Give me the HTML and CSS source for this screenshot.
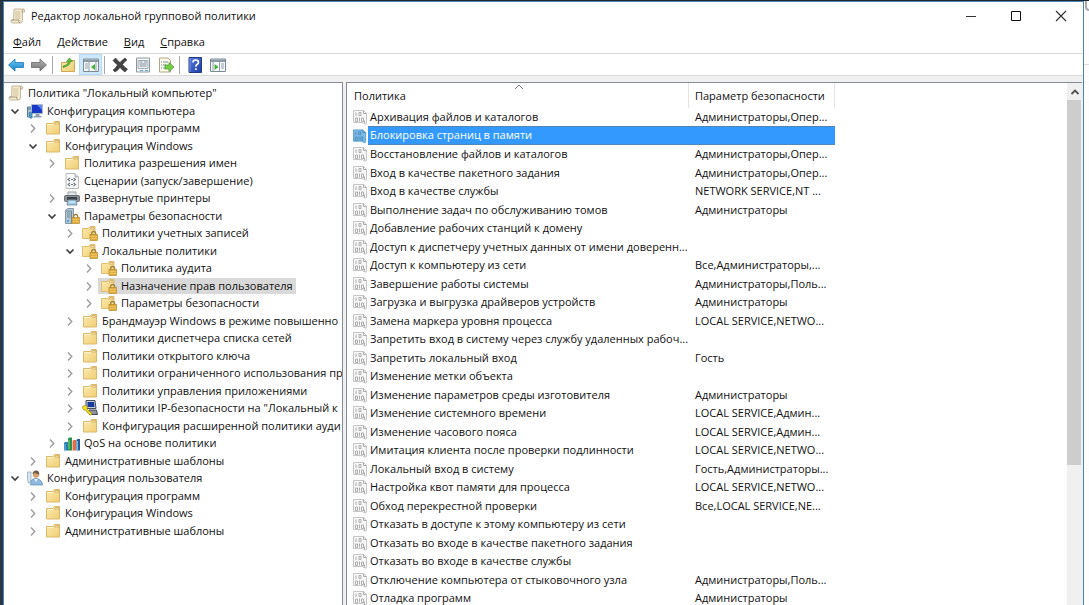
FILE: index.html
```html
<!DOCTYPE html>
<html lang="ru">
<head>
<meta charset="utf-8">
<title>Редактор локальной групповой политики</title>
<link rel="stylesheet" href="styles.css">
</head>
<body>
<svg class="sprite" aria-hidden="true">
  <defs>
    <linearGradient id="g-folder" x1="0" y1="0" x2="1" y2="1"><stop offset="0" stop-color="#fdebb0"/><stop offset="1" stop-color="#efce74"/></linearGradient>
    <linearGradient id="g-blue" x1="0" y1="0" x2="0" y2="1"><stop offset="0" stop-color="#6cc8f5"/><stop offset="1" stop-color="#1583cf"/></linearGradient>
    <linearGradient id="g-gray" x1="0" y1="0" x2="0" y2="1"><stop offset="0" stop-color="#b4b4b4"/><stop offset="1" stop-color="#747474"/></linearGradient>
    <linearGradient id="g-help" x1="0" y1="0" x2="1" y2="1"><stop offset="0" stop-color="#5a7ade"/><stop offset="1" stop-color="#1c3da8"/></linearGradient>
  </defs>
  <symbol id="open" viewBox="0 0 12 12"><path d="M2.500 4.500L6 8l3.500-3.500" fill="none" stroke="#404040" stroke-width="1.700"/></symbol>
  <symbol id="closed" viewBox="0 0 12 12"><path d="M4 2.500L7.700 6.500 4 10.500" fill="none" stroke="#a0a0a0" stroke-width="1.500"/></symbol>
  <symbol id="folder" viewBox="0 0 16 16"><path d="M1.500 3.500h6.500l1.500-2h5v12.500h-13z" fill="url(#g-folder)" stroke="#dcb968"/><path d="M9.500 4h4.500l-.5-1.500h-3z" fill="#fff3cc" stroke="#c9a254" stroke-width=".7"/><path d="M2.500 4.500h6" stroke="#fff6d2"/></symbol>
  <symbol id="lock" viewBox="0 0 16 16"><path d="M9.700 10V8.500a2 2 0 0 1 4 0V10" fill="none" stroke="#a08344" stroke-width="1.300"/><rect x="8" y="9.500" width="7.500" height="6" fill="#e0ac3c" stroke="#b98a2c" stroke-width=".7"/><path d="M8.500 11.500h6.500M8.500 13.500h6.500" stroke="#f1cf74" stroke-width=".7"/></symbol>
  <symbol id="lockfolder" viewBox="0 0 16 16"><path d="M.5 3.500h6l1.500-2h5v12h-12.500z" fill="url(#g-folder)" stroke="#dfbd70"/><path d="M8 4h4.500l-.5-1.500H9z" fill="#fff3cc" stroke="#c9a254" stroke-width=".7"/><use href="#lock"/></symbol>
  <symbol id="serverlock" viewBox="0 0 16 16"><path d="M1.500 2.500l2-2h6v13l-1.500 2h-6.500z" fill="#b4c8d4" stroke="#8197a6"/><path d="M2 3h5.500v12M3 5h3.500M3 7h3.500M3 9h3.500" fill="none" stroke="#6a8799"/><path d="M3 12h2v2h-2z" fill="#4aa8d8"/><use href="#lock"/></symbol>
  <symbol id="scroll" viewBox="0 0 16 16"><path d="M4 1h9.500q2 .5 1 3h-2v8.500q0 2.500-2.500 2.500h-7.500q-2-.5-1.500-3h2.500z" fill="#f4ead0" stroke="#b7aa8c" stroke-width=".8"/><path d="M12.500 4q-1-2 1-3M1.500 12h7.500q-.8 2 1 3" fill="none" stroke="#98886a" stroke-width=".8"/><path d="M5 4h5.500M5 6h5.500M5 8h5.500M5 10h5.500" stroke="#c9b98e" stroke-width=".8"/></symbol>
  <symbol id="pc" viewBox="0 0 16 16"><path d="M.5 4h4v10h-4z" fill="#a8c5d8" stroke="#557a96"/><path d="M4.500 1.500h11v9h-11z" fill="#1838c8" stroke="#b0bcc8"/><path d="M10 2h5v5z" fill="#5d87ee"/><path d="M8.500 11h4v2h2v1.500h-8V13h2z" fill="#8da0b2"/><path d="M1 6h3M2 10q3-2 3 1v4H3z" stroke="#3b82b6" fill="#559bcc"/></symbol>
  <symbol id="script" viewBox="0 0 16 16"><path d="M2 .5h9l3.500 3.500v11.500h-12.500z" fill="#fafafa" stroke="#bababa"/><path d="M11 .5v3.500h3.500" fill="#ddd" stroke="#aaa"/><path d="M6 5l-2 1.500L6 8M9.500 5l2 1.500-2 1.500M6 10l-2 1.500L6 13M9.500 10l2 1.500-2 1.500M7 6.500h2M7 11.500h2" fill="none" stroke="#707984" stroke-width="1.100"/></symbol>
  <symbol id="printer" viewBox="0 0 16 16"><path d="M4 2h8v4H4z" fill="#e2e6e9" stroke="#9aa1a6"/><rect x=".5" y="5.500" width="15" height="6" rx="1" fill="#8a9095" stroke="#6a7075"/><path d="M3 7h10v3H3z" fill="#3d4348"/><path d="M4 10h8l1 5H3z" fill="#9bcdea" stroke="#81939e"/><path d="M5 12h6" stroke="#e3f5ff"/></symbol>
  <symbol id="ipsec" viewBox="0 0 16 16"><path d="M4 .5h9l1 8H4z" fill="#c8ccd4" stroke="#48505c"/><path d="M5.500 2h6.500l.5 5H5.500z" fill="#173b9c"/><path d="M7 10h7.500l1 4.500H8z" fill="#8d949e" stroke="#444b55"/><path d="M1 6q3-1.500 4.500 1l-.5 2 5 4.500-1 1.500H7.500l-1-2-1.500-.5-.5-2Q1 10.500.500 8z" fill="#f5df24" stroke="#a08d12" stroke-width=".7"/></symbol>
  <symbol id="qos" viewBox="0 0 16 16"><path d="M0 8l1-1h3v8.500H0z" fill="#287fae"/><path d="M4 3.500l1-1h3v13H4z" fill="#28934e"/><path d="M5 5v9" stroke="#8ad66a"/><path d="M8.500 6l1-1h2.700v10.500H8.500z" fill="#df704b"/><path d="M12.500 5l1-1H16v11.500h-3.500z" fill="#245d9b"/><path d="M1 9v6M13.500 6v9" stroke="#6fc3e6"/></symbol>
  <symbol id="user" viewBox="0 0 16 16"><path d="M3.500 15l1-5 4-2 4 1.500q3 1.500 3 5.500z" fill="#8fb9df" stroke="#5b8db8" stroke-width=".7"/><circle cx="9" cy="4.500" r="3.200" fill="#d4a06e"/><path d="M5.500 4Q6 .3 9.500.5q3 .5 2.800 4Q9 4 8 2.500 7 4 5.500 4z" fill="#6b5846"/><path d="M.5 2h3.500v7l-1 4H1.500l-1-4z" fill="#d8e7f2" stroke="#8fa9be" stroke-width=".8"/><path d="M7 9l2 3 2-3" fill="#e6f0f8"/></symbol>
  <symbol id="policy" viewBox="0 0 16 16"><path d="M.5 1.500h10l3 3v9.500q0 1.500-2 1l-2-1.500h-9z" fill="#f7f7f7" stroke="#c6c6c6"/><path d="M10.500 1.500v3h3M11.500 11.500v3" fill="none" stroke="#adadad"/><path d="M3 3.500v3.500M2.500 9v3.500h2V9zM6.500 8.500v4M8.500 9v3.500h2V9zM6 3.500v3h2v-3z" fill="none" stroke="#a6a6a6" stroke-width=".9"/></symbol>
  <symbol id="policy-sel" viewBox="0 0 16 16"><path d="M.5 1.500h10l3 3v9.500q0 1.500-2 1l-2-1.500h-9z" fill="#7db9e4" stroke="#5d9fd0"/><path d="M10.500 1.500v3h3M3 3.500v3.500M2.500 9v3.500h2V9zM6.500 8.500v4M8.500 9v3.500h2V9zM6 3.500v3h2v-3z" fill="none" stroke="#4389be" stroke-width=".9"/></symbol>
</svg>

<div class="desktop">
  <main class="window">
    <header class="titlebar">
      <svg class="icon"><use href="#scroll"/></svg>
      <h1 class="title">Редактор локальной групповой политики</h1>
      <div class="captions">
        <button class="caption" aria-label="Свернуть"><svg viewBox="0 0 12 12"><path d="M1 6.500h10" stroke="#333" fill="none"/></svg></button>
        <button class="caption" aria-label="Развернуть"><svg viewBox="0 0 12 12"><path d="M1.500 1.500h9v9h-9z" stroke="#111" fill="none"/></svg></button>
        <button class="caption" aria-label="Закрыть"><svg viewBox="0 0 12 12"><path d="M1 1l10 10M11 1L1 11" stroke="#333" fill="none" stroke-width="1.200"/></svg></button>
      </div>
    </header>
    <nav class="menubar">
      <button class="menu"><u>Ф</u>айл</button>
      <button class="menu"><u>Д</u>ействие</button>
      <button class="menu"><u>В</u>ид</button>
      <button class="menu"><u>С</u>правка</button>
    </nav>
    <div class="toolbar" role="toolbar">
      <button class="tool" aria-label="Назад"><svg viewBox="0 0 16 16"><path d="M.5 8L7 2v3.500h8.500v5H7V14z" fill="url(#g-blue)" stroke="#1f76b2" stroke-width=".8"/></svg></button>
      <button class="tool" aria-label="Вперед"><svg viewBox="0 0 16 16"><path d="M15.500 8L9 2v3.500H.5v5H9V14z" fill="url(#g-gray)" stroke="#686868" stroke-width=".8"/></svg></button>
      <span class="divider"></span>
      <button class="tool" aria-label="Вверх"><svg viewBox="0 0 16 16"><path d="M1.500 5.500h6l1-2h6v11h-13z" fill="url(#g-folder)" stroke="#cfa955"/><path d="M3 9q5-1 5.500-4.500H6.500L9.500 1l3 3.500h-2Q10 9 3 10.500z" fill="#60bd39" stroke="#398d26" stroke-width=".6"/></svg></button>
      <button class="tool tool-on" aria-label="Дерево консоли" aria-pressed="true"><svg viewBox="0 0 16 16"><path d="M.5 2h15v12.500H.5z" fill="#f6f8fa" stroke="#7c8a96"/><path d="M1 2.500h14v2.500H1z" fill="#8b9aa6"/><path d="M6 5v9M2 7h3M2 9h3M2 11h3M13 5v9" stroke="#93a1ad"/><path d="M12 7v6L8 10z" fill="#48ae37"/></svg></button>
      <span class="divider"></span>
      <button class="tool" aria-label="Удалить"><svg viewBox="0 0 16 16"><path d="M1 3.500L3.500 1q2.500 3 4.500 4.500Q10 3 13 1l2 2q-3 2-4.500 4.500 2 3 5 4.500L13 15q-3-2-5-4.500Q6 13.500 3 15l-2-2q3-2 4.500-5Q3 6 1 3.500z" fill="#444" stroke="#333" stroke-width=".6"/></svg></button>
      <button class="tool" aria-label="Свойства"><svg viewBox="0 0 16 16"><path d="M1.500 1h13v14h-13z" fill="#f6f8fa" stroke="#8c97a0"/><path d="M3 3.500h10v8H3z" fill="#e7ecf0" stroke="#a5afb8"/><path d="M4.500 5h3M9 5h3M4.500 7h7M4.500 9h7" stroke="#8996a1"/><path d="M5 13.500h3M10 13.500h3" stroke="#54aed7"/></svg></button>
      <button class="tool" aria-label="Экспорт списка"><svg viewBox="0 0 16 16"><path d="M1.500 1h8.500l2.500 2.500v11.500h-11z" fill="#fffbe8" stroke="#afa788"/><path d="M3 5h1M5 5h5M3 8h1M5 8h3M3 11h1M5 11h4" stroke="#6e95ad"/><path d="M7 8h4V5.500l5 4.500-5 4.500V12H7z" fill="#73cf41" stroke="#43952a" stroke-width=".7"/></svg></button>
      <span class="divider"></span>
      <button class="tool" aria-label="Справка"><svg viewBox="0 0 16 16"><path d="M2 .5h12.500v15H2z" fill="url(#g-help)" stroke="#233b86"/><path d="M3 1v14" stroke="#7895ee"/><path d="M6 5.500q0-2.500 2.700-2.500 2.800 0 2.800 2.300 0 1.500-1.500 2.200-1.200.7-1.200 2.300" fill="none" stroke="#fff" stroke-width="1.600"/><path d="M8 11.200h1.700v1.800H8z" fill="#fff"/></svg></button>
      <button class="tool" aria-label="Область действий"><svg viewBox="0 0 16 16"><path d="M.5 2h15v12.500H.5z" fill="#f6f8fa" stroke="#7c8a96"/><path d="M1 2.500h14v2.500H1z" fill="#8b9aa6"/><path d="M9.500 5v9M11 7h3M11 9h3M11 11h3M3 5v9" stroke="#93a1ad"/><path d="M4.500 7v6l4-3z" fill="#48ae37"/></svg></button>
    </div>
    <div class="panes">
      <ul class="tree" role="tree">
        <li class="node l0"><span class="label"><svg class="icon"><use href="#scroll"/></svg>Политика "Локальный компьютер"</span></li>
        <li class="node l1"><svg class="chev"><use href="#open"/></svg><span class="label"><svg class="icon"><use href="#pc"/></svg>Конфигурация компьютера</span></li>
        <li class="node l2"><svg class="chev"><use href="#closed"/></svg><span class="label"><svg class="icon"><use href="#folder"/></svg>Конфигурация программ</span></li>
        <li class="node l2"><svg class="chev"><use href="#open"/></svg><span class="label"><svg class="icon"><use href="#folder"/></svg>Конфигурация Windows</span></li>
        <li class="node l3"><svg class="chev"><use href="#closed"/></svg><span class="label"><svg class="icon"><use href="#folder"/></svg>Политика разрешения имен</span></li>
        <li class="node l3"><svg class="chev"></svg><span class="label"><svg class="icon"><use href="#script"/></svg>Сценарии (запуск/завершение)</span></li>
        <li class="node l3"><svg class="chev"><use href="#closed"/></svg><span class="label"><svg class="icon"><use href="#printer"/></svg>Развернутые принтеры</span></li>
        <li class="node l3"><svg class="chev"><use href="#open"/></svg><span class="label"><svg class="icon"><use href="#serverlock"/></svg>Параметры безопасности</span></li>
        <li class="node l4"><svg class="chev"><use href="#closed"/></svg><span class="label"><svg class="icon"><use href="#lockfolder"/></svg>Политики учетных записей</span></li>
        <li class="node l4"><svg class="chev"><use href="#open"/></svg><span class="label"><svg class="icon"><use href="#lockfolder"/></svg>Локальные политики</span></li>
        <li class="node l5"><svg class="chev"><use href="#closed"/></svg><span class="label"><svg class="icon"><use href="#lockfolder"/></svg>Политика аудита</span></li>
        <li class="node l5"><svg class="chev"><use href="#closed"/></svg><span class="label current"><svg class="icon"><use href="#lockfolder"/></svg>Назначение прав пользователя</span></li>
        <li class="node l5"><svg class="chev"><use href="#closed"/></svg><span class="label"><svg class="icon"><use href="#lockfolder"/></svg>Параметры безопасности</span></li>
        <li class="node l4"><svg class="chev"><use href="#closed"/></svg><span class="label"><svg class="icon"><use href="#folder"/></svg>Брандмауэр Windows в режиме повышенно</span></li>
        <li class="node l4"><svg class="chev"></svg><span class="label"><svg class="icon"><use href="#folder"/></svg>Политики диспетчера списка сетей</span></li>
        <li class="node l4"><svg class="chev"><use href="#closed"/></svg><span class="label"><svg class="icon"><use href="#folder"/></svg>Политики открытого ключа</span></li>
        <li class="node l4"><svg class="chev"><use href="#closed"/></svg><span class="label"><svg class="icon"><use href="#folder"/></svg>Политики ограниченного использования пр</span></li>
        <li class="node l4"><svg class="chev"><use href="#closed"/></svg><span class="label"><svg class="icon"><use href="#folder"/></svg>Политики управления приложениями</span></li>
        <li class="node l4"><svg class="chev"><use href="#closed"/></svg><span class="label"><svg class="icon"><use href="#ipsec"/></svg>Политики IP-безопасности на "Локальный к</span></li>
        <li class="node l4"><svg class="chev"><use href="#closed"/></svg><span class="label"><svg class="icon"><use href="#folder"/></svg>Конфигурация расширенной политики ауди</span></li>
        <li class="node l3"><svg class="chev"><use href="#closed"/></svg><span class="label"><svg class="icon"><use href="#qos"/></svg>QoS на основе политики</span></li>
        <li class="node l2"><svg class="chev"><use href="#closed"/></svg><span class="label"><svg class="icon"><use href="#folder"/></svg>Административные шаблоны</span></li>
        <li class="node l1"><svg class="chev"><use href="#open"/></svg><span class="label"><svg class="icon"><use href="#user"/></svg>Конфигурация пользователя</span></li>
        <li class="node l2"><svg class="chev"><use href="#closed"/></svg><span class="label"><svg class="icon"><use href="#folder"/></svg>Конфигурация программ</span></li>
        <li class="node l2"><svg class="chev"><use href="#closed"/></svg><span class="label"><svg class="icon"><use href="#folder"/></svg>Конфигурация Windows</span></li>
        <li class="node l2"><svg class="chev"><use href="#closed"/></svg><span class="label"><svg class="icon"><use href="#folder"/></svg>Административные шаблоны</span></li>
      </ul>
      <section class="list">
        <div class="list-body">
        <table class="policies">
          <colgroup><col class="col-name"><col class="col-value"></colgroup>
          <thead><tr><th>Политика<svg class="sort" viewBox="0 0 10 6"><path d="M1 5l4-4 4 4" fill="none" stroke="#777"/></svg></th><th>Параметр безопасности</th></tr></thead>
          <tbody>
            <tr><td><div class="cell"><svg class="icon"><use href="#policy"/></svg><span class="name">Архивация файлов и каталогов</span></div></td><td>Администраторы,Опер...</td></tr>
            <tr class="selected"><td><div class="cell"><svg class="icon"><use href="#policy-sel"/></svg><span class="name">Блокировка страниц в памяти</span></div></td><td></td></tr>
            <tr><td><div class="cell"><svg class="icon"><use href="#policy"/></svg><span class="name">Восстановление файлов и каталогов</span></div></td><td>Администраторы,Опер...</td></tr>
            <tr><td><div class="cell"><svg class="icon"><use href="#policy"/></svg><span class="name">Вход в качестве пакетного задания</span></div></td><td>Администраторы,Опер...</td></tr>
            <tr><td><div class="cell"><svg class="icon"><use href="#policy"/></svg><span class="name">Вход в качестве службы</span></div></td><td>NETWORK SERVICE,NT ...</td></tr>
            <tr><td><div class="cell"><svg class="icon"><use href="#policy"/></svg><span class="name">Выполнение задач по обслуживанию томов</span></div></td><td>Администраторы</td></tr>
            <tr><td><div class="cell"><svg class="icon"><use href="#policy"/></svg><span class="name">Добавление рабочих станций к домену</span></div></td><td></td></tr>
            <tr><td><div class="cell"><svg class="icon"><use href="#policy"/></svg><span class="name">Доступ к диспетчеру учетных данных от имени доверенн...</span></div></td><td></td></tr>
            <tr><td><div class="cell"><svg class="icon"><use href="#policy"/></svg><span class="name">Доступ к компьютеру из сети</span></div></td><td>Все,Администраторы,...</td></tr>
            <tr><td><div class="cell"><svg class="icon"><use href="#policy"/></svg><span class="name">Завершение работы системы</span></div></td><td>Администраторы,Поль...</td></tr>
            <tr><td><div class="cell"><svg class="icon"><use href="#policy"/></svg><span class="name">Загрузка и выгрузка драйверов устройств</span></div></td><td>Администраторы</td></tr>
            <tr><td><div class="cell"><svg class="icon"><use href="#policy"/></svg><span class="name">Замена маркера уровня процесса</span></div></td><td>LOCAL SERVICE,NETWO...</td></tr>
            <tr><td><div class="cell"><svg class="icon"><use href="#policy"/></svg><span class="name">Запретить вход в систему через службу удаленных рабоч...</span></div></td><td></td></tr>
            <tr><td><div class="cell"><svg class="icon"><use href="#policy"/></svg><span class="name">Запретить локальный вход</span></div></td><td>Гость</td></tr>
            <tr><td><div class="cell"><svg class="icon"><use href="#policy"/></svg><span class="name">Изменение метки объекта</span></div></td><td></td></tr>
            <tr><td><div class="cell"><svg class="icon"><use href="#policy"/></svg><span class="name">Изменение параметров среды изготовителя</span></div></td><td>Администраторы</td></tr>
            <tr><td><div class="cell"><svg class="icon"><use href="#policy"/></svg><span class="name">Изменение системного времени</span></div></td><td>LOCAL SERVICE,Админ...</td></tr>
            <tr><td><div class="cell"><svg class="icon"><use href="#policy"/></svg><span class="name">Изменение часового пояса</span></div></td><td>LOCAL SERVICE,Админ...</td></tr>
            <tr><td><div class="cell"><svg class="icon"><use href="#policy"/></svg><span class="name">Имитация клиента после проверки подлинности</span></div></td><td>LOCAL SERVICE,NETWO...</td></tr>
            <tr><td><div class="cell"><svg class="icon"><use href="#policy"/></svg><span class="name">Локальный вход в систему</span></div></td><td>Гость,Администраторы...</td></tr>
            <tr><td><div class="cell"><svg class="icon"><use href="#policy"/></svg><span class="name">Настройка квот памяти для процесса</span></div></td><td>LOCAL SERVICE,NETWO...</td></tr>
            <tr><td><div class="cell"><svg class="icon"><use href="#policy"/></svg><span class="name">Обход перекрестной проверки</span></div></td><td>Все,LOCAL SERVICE,NE...</td></tr>
            <tr><td><div class="cell"><svg class="icon"><use href="#policy"/></svg><span class="name">Отказать в доступе к этому компьютеру из сети</span></div></td><td></td></tr>
            <tr><td><div class="cell"><svg class="icon"><use href="#policy"/></svg><span class="name">Отказать во входе в качестве пакетного задания</span></div></td><td></td></tr>
            <tr><td><div class="cell"><svg class="icon"><use href="#policy"/></svg><span class="name">Отказать во входе в качестве службы</span></div></td><td></td></tr>
            <tr><td><div class="cell"><svg class="icon"><use href="#policy"/></svg><span class="name">Отключение компьютера от стыковочного узла</span></div></td><td>Администраторы,Поль...</td></tr>
            <tr><td><div class="cell"><svg class="icon"><use href="#policy"/></svg><span class="name">Отладка программ</span></div></td><td>Администраторы</td></tr>
          </tbody>
        </table>
        </div>
        <div class="scrollbar">
          <button class="scroll-up" aria-label="Прокрутить вверх"><svg viewBox="0 0 10 8"><path d="M1.500 6L5 2.500 8.500 6" fill="none" stroke="#505050" stroke-width="1.800"/></svg></button>
          <div class="thumb"></div>
          <div class="track"></div>
        </div>
      </section>
    </div>
  </main>
  <aside class="behind"><div class="behind-tab"></div><div class="behind-bar"></div></aside>
</div>
</body>
</html>
```
FILE: styles.css
```css
* { box-sizing: border-box; }
body {
  margin: 0;
  font: 11px/16px "Open Sans", "Noto Sans", sans-serif;
  color: #111;
  background: #fff;
  overflow: hidden;
}
button { font: inherit; color: inherit; background: none; border: 0; padding: 0; }
svg { display: block; flex: none; }
.sprite { position: absolute; width: 0; height: 0; }
.icon { width: 16px; height: 16px; }

.desktop { display: flex; height: 100vh; border-top: 1px solid #1c2733; border-left: 3px solid #2a3644; }
.window {
  flex: 1;
  min-width: 0;
  display: flex;
  flex-direction: column;
  background: #fff;
  border: solid #4a86ad;
  border-width: 1px 1px 0;
}
.behind { width: 5px; background: #fdfdfe; }
.behind-tab { height: 10px; margin-left: 1px; border: solid #a9abb0; border-width: 0 0 2px 2px; border-radius: 0 0 0 4px; }
.behind-bar { height: 54px; border-bottom: 1px solid #d8dce4; }

.titlebar { display: flex; align-items: center; height: 28px; padding-left: 6px; gap: 5px; }
.title { flex: 1; margin: 0; font-size: 11px; font-weight: 400; }
.captions { display: flex; }
.caption { width: 45px; height: 28px; display: grid; place-items: center; }
.caption svg { width: 12px; height: 12px; }

.menubar { display: flex; gap: 16px; height: 24px; padding-left: 9px; align-items: center; border-bottom: 1px solid #d9d9d9; }
.menu u { text-underline-offset: 1px; }

.toolbar { display: flex; align-items: center; height: 22px; border-bottom: 1px solid #dadada; }
.tool { width: 23px; height: 21px; display: grid; place-items: center; }
.tool svg { width: 16px; height: 16px; }
.tool-on { background: #cde8fb; border: 1px solid #b3daf6; }
.divider { width: 1px; height: 18px; margin: 0 3px 0 2px; background: #a8a8a8; }

.panes {
  flex: 1;
  min-height: 0;
  display: grid;
  grid-template-columns: minmax(0, 339px) minmax(0, 1fr);
  gap: 3px;
  padding: 6px 1px 0 0;
  background: #f0f0f0;
}
.tree {
  margin: 0;
  padding: 1px 0 0;
  list-style: none;
  background: #fff;
  border: solid #858c96;
  border-width: 1px 1px 0 0;
  overflow: hidden;
}
.node { display: flex; align-items: center; height: 18px; white-space: nowrap; }
.node:nth-child(even) { height: 17px; }
.chev { width: 12px; height: 12px; margin-right: 3px; }
.label { display: flex; align-items: center; gap: 4px; padding: 0 3px; }
.current { background: #d9d9d9; }
.l0 { padding-left: 1px; }
.l1 { padding-left: 5px; }
.l2 { padding-left: 23px; }
.l3 { padding-left: 42px; }
.l4 { padding-left: 60px; }
.l5 { padding-left: 79px; }

.list { display: flex; background: #fff; border: solid #858c96; border-width: 1px 0 0 1px; overflow: hidden; }
.list-body { flex: 1; min-width: 0; overflow: hidden; }
.policies { width: 488px; table-layout: fixed; border-collapse: separate; border-spacing: 0; }
.col-name { width: 342px; }
.col-value { width: 146px; }
th { position: relative; height: 25px; padding: 0 0 0 6px; text-align: left; font-weight: 400; white-space: nowrap; border-right: 1px solid #e4e4e4; }
th:first-child { padding-left: 7px; }
.sort { position: absolute; top: 1px; left: 167px; width: 10px; height: 6px; }
td { height: 18px; padding: 0 0 0 6px; line-height: 18px; white-space: nowrap; }
tr:nth-child(even) td { height: 19px; }
.cell { display: flex; align-items: center; height: 18px; }
.name { flex: 1; padding-left: 1px; }
.selected td { background: #3399ff; color: #fff; box-shadow: inset 0 1px #4f87b8, inset 0 -1px #4f87b8; }
.selected td:first-child { padding-left: 0; background: none; box-shadow: none; }
.selected .cell { height: 19px; padding-left: 6px; }
.selected .icon { width: 15px; }
.selected .name { padding-left: 2px; background: #3399ff; box-shadow: inset 0 1px #4f87b8, inset 0 -1px #4f87b8; height: 19px; }

.scrollbar { width: 15px; display: flex; flex-direction: column; background: #f0f0f0; }
.scroll-up { height: 17px; display: grid; place-items: center; }
.scroll-up svg { width: 10px; height: 8px; }
.thumb { flex: 365; background: #cdcdcd; margin-right: 1px; }
.track { flex: 140; }
```
